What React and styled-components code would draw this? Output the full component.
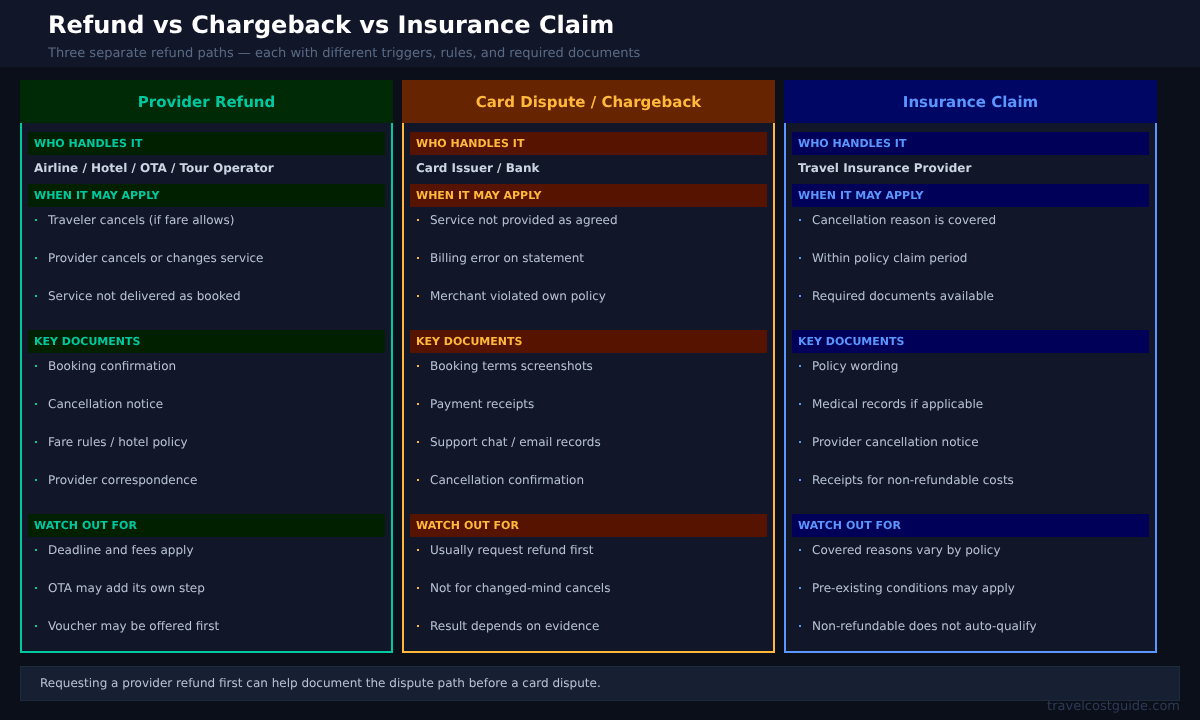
import styled, { createGlobalStyle } from "styled-components";

const columns = [
    {
        title: "Provider Refund",
        color: "#00c8a0",
        headBg: "#002a06",
        labelBg: "#002000",
        handler: "Airline / Hotel / OTA / Tour Operator",
        apply: [
            "Traveler cancels (if fare allows)",
            "Provider cancels or changes service",
            "Service not delivered as booked",
        ],
        docs: [
            "Booking confirmation",
            "Cancellation notice",
            "Fare rules / hotel policy",
            "Provider correspondence",
        ],
        watch: [
            "Deadline and fees apply",
            "OTA may add its own step",
            "Voucher may be offered first",
        ],
    },
    {
        title: "Card Dispute / Chargeback",
        color: "#ffb83c",
        headBg: "#662400",
        labelBg: "#561400",
        handler: "Card Issuer / Bank",
        apply: [
            "Service not provided as agreed",
            "Billing error on statement",
            "Merchant violated own policy",
        ],
        docs: [
            "Booking terms screenshots",
            "Payment receipts",
            "Support chat / email records",
            "Cancellation confirmation",
        ],
        watch: [
            "Usually request refund first",
            "Not for changed-mind cancels",
            "Result depends on evidence",
        ],
    },
    {
        title: "Insurance Claim",
        color: "#5b96ff",
        headBg: "#000664",
        labelBg: "#000058",
        handler: "Travel Insurance Provider",
        apply: [
            "Cancellation reason is covered",
            "Within policy claim period",
            "Required documents available",
        ],
        docs: [
            "Policy wording",
            "Medical records if applicable",
            "Provider cancellation notice",
            "Receipts for non-refundable costs",
        ],
        watch: [
            "Covered reasons vary by policy",
            "Pre-existing conditions may apply",
            "Non-refundable does not auto-qualify",
        ],
    },
];

function BulletList({ items, color }) {
    return (
        <List>
            {items.map((item) => (
                <Item key={item} $color={color}>
                    {item}
                </Item>
            ))}
        </List>
    );
}

export default function App() {
    return (
        <Page>
            <GlobalStyle />
            <Header>
                <Title>Refund vs Chargeback vs Insurance Claim</Title>
                <Subtitle>
                    Three separate refund paths — each with different triggers, rules, and required documents
                </Subtitle>
            </Header>
            <Columns>
                {columns.map((col) => (
                    <Column key={col.title}>
                        <ColumnTitle $bg={col.headBg} $color={col.color}>
                            {col.title}
                        </ColumnTitle>
                        <ColumnBody $color={col.color}>
                            <Label $bg={col.labelBg} $color={col.color}>WHO HANDLES IT</Label>
                            <Handler>{col.handler}</Handler>
                            <Label $bg={col.labelBg} $color={col.color}>WHEN IT MAY APPLY</Label>
                            <BulletList items={col.apply} color={col.color} />
                            <Label $bg={col.labelBg} $color={col.color}>KEY DOCUMENTS</Label>
                            <BulletList items={col.docs} color={col.color} />
                            <Label $bg={col.labelBg} $color={col.color}>WATCH OUT FOR</Label>
                            <BulletList items={col.watch} color={col.color} />
                        </ColumnBody>
                    </Column>
                ))}
            </Columns>
            <Note>Requesting a provider refund first can help document the dispute path before a card dispute.</Note>
            <Watermark>travelcostguide.com</Watermark>
        </Page>
    );
}

const GlobalStyle = createGlobalStyle`
  * {
    box-sizing: border-box;
  }

  body {
    margin: 0;
    background: #0b0f1a;
    font-family: "DejaVu Sans", sans-serif;
    text-rendering: geometricPrecision;
  }
`;

const Page = styled.div`
  position: relative;
  width: 1200px;
  height: 720px;
  overflow: hidden;
  will-change: transform;
`;

const Header = styled.header`
  height: 67px;
  padding: 10px 48px 0;
  background: #111728;
`;

const Title = styled.h1`
  margin: 0;
  font-size: 24px;
  line-height: 30px;
  font-weight: 700;
  color: #ffffff;
`;

const Subtitle = styled.p`
  margin: 5px 0 0;
  font-size: 13px;
  line-height: 18px;
  color: #5a6a85;
`;

const Columns = styled.div`
  display: flex;
  gap: 9px;
  margin: 13px 0 0 20px;
`;

const Column = styled.section`
  width: 373px;
  height: 573px;
  display: flex;
  flex-direction: column;
`;

const ColumnTitle = styled.h2`
  flex: none;
  height: 43px;
  margin: 0;
  display: flex;
  align-items: center;
  justify-content: center;
  font-size: 15px;
  font-weight: 700;
  background: ${(props) => props.$bg};
  color: ${(props) => props.$color};
`;

const ColumnBody = styled.div`
  flex: 1;
  padding: 9px 6px 0;
  background: #111728;
  border: 2px solid ${(props) => props.$color};
  border-top: none;
`;

const Label = styled.div`
  height: 23px;
  padding-left: 6px;
  display: flex;
  align-items: center;
  font-size: 11px;
  font-weight: 700;
  background: ${(props) => props.$bg};
  color: ${(props) => props.$color};
`;

const Handler = styled.div`
  height: 29px;
  padding: 0 0 4px 6px;
  display: flex;
  align-items: center;
  font-size: 12px;
  font-weight: 700;
  color: #cbd5e1;
`;

const List = styled.ul`
  margin: 0 0 21px;
  padding: 0;
  list-style: none;
  display: flex;
  flex-direction: column;
  gap: 12px;

  &:last-child {
    margin-bottom: 0;
  }
`;

const Item = styled.li`
  position: relative;
  height: 26px;
  padding-left: 20px;
  display: flex;
  align-items: center;
  font-size: 12px;
  color: #b8c2d4;

  &::before {
    content: "";
    position: absolute;
    left: 7px;
    top: 12px;
    width: 2px;
    height: 2px;
    background: ${(props) => props.$color};
  }
`;

const Note = styled.div`
  height: 35px;
  margin: 13px 20px 0;
  padding: 0 0 2px 19px;
  display: flex;
  align-items: center;
  font-size: 12px;
  color: #b8c2d4;
  background: #162032;
  border: 1px solid #1e293b;
`;

const Watermark = styled.div`
  position: absolute;
  right: 20px;
  bottom: 5px;
  font-size: 13px;
  line-height: 16px;
  color: #2e3a55;
`;
